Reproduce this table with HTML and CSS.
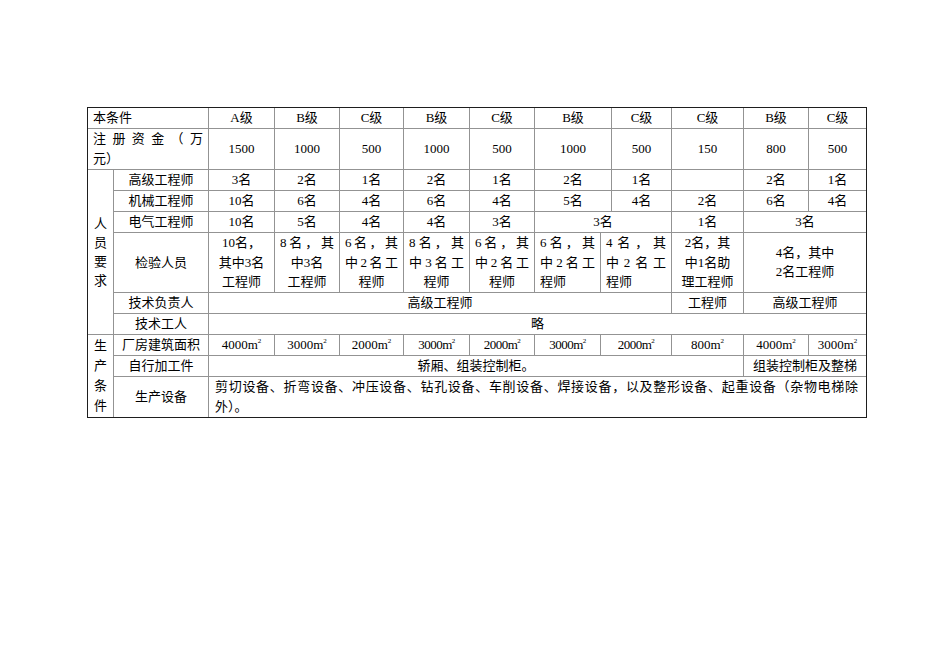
FILE: index.html
```html
<!DOCTYPE html>
<html lang="zh-CN">
<head>
<meta charset="utf-8">
<title>本条件</title>
<link rel="stylesheet" href="styles.css">
</head>
<body>
<div class="page">
<table class="spec">
<colgroup>
<col class="c1"><col class="c2"><col class="c3"><col class="c4"><col class="c5"><col class="c6"><col class="c7"><col class="c8"><col class="c9"><col class="c10"><col class="c11"><col class="c12"><col class="c13">
</colgroup>
<tbody>
<tr>
<td colspan="2" class="left">本条件</td>
<td>A级</td><td>B级</td><td>C级</td><td>B级</td><td>C级</td><td colspan="2">B级</td><td>C级</td><td>C级</td><td>B级</td><td>C级</td>
</tr>
<tr>
<td colspan="2" class="left"><span class="jl">注册资金（万</span><span class="ln">元）</span></td>
<td>1500</td><td>1000</td><td>500</td><td>1000</td><td>500</td><td colspan="2">1000</td><td>500</td><td>150</td><td>800</td><td>500</td>
</tr>
<tr>
<td rowspan="6" class="vert"><span class="vtext">人<br>员<br>要<br>求</span></td>
<td>高级工程师</td>
<td>3名</td><td>2名</td><td>1名</td><td>2名</td><td>1名</td><td colspan="2">2名</td><td>1名</td><td></td><td>2名</td><td>1名</td>
</tr>
<tr>
<td>机械工程师</td>
<td>10名</td><td>6名</td><td>4名</td><td>6名</td><td>4名</td><td colspan="2">5名</td><td>4名</td><td>2名</td><td>6名</td><td>4名</td>
</tr>
<tr>
<td>电气工程师</td>
<td>10名</td><td>5名</td><td>4名</td><td>4名</td><td>3名</td><td colspan="3">3名</td><td>1名</td><td colspan="2">3名</td>
</tr>
<tr class="tall">
<td>检验人员</td>
<td><span class="ln">10名，</span><span class="ln">其中3名</span><span class="ln">工程师</span></td>
<td><span class="jl">8名，其</span><span class="ln">中3名</span><span class="ln">工程师</span></td>
<td><span class="jl">6名，其</span><span class="jl">中2名工</span><span class="ln">程师</span></td>
<td><span class="jl">8名，其</span><span class="jl">中3名工</span><span class="ln">程师</span></td>
<td><span class="jl">6名，其</span><span class="jl">中2名工</span><span class="ln">程师</span></td>
<td class="left"><span class="jl">6名，其</span><span class="jl">中2名工</span><span class="ln">程师</span></td>
<td colspan="2" class="left"><span class="jl">4名，其</span><span class="jl">中2名工</span><span class="ln">程师</span></td>
<td><span class="ln">2名，其</span><span class="ln">中1名助</span><span class="ln">理工程师</span></td>
<td colspan="2"><span class="ln">4名，其中</span><span class="ln">2名工程师</span></td>
</tr>
<tr>
<td>技术负责人</td>
<td colspan="8">高级工程师</td><td>工程师</td><td colspan="2">高级工程师</td>
</tr>
<tr>
<td>技术工人</td>
<td colspan="11">略</td>
</tr>
<tr>
<td rowspan="3" class="vert"><span class="vtext2">生<br>产<br>条<br>件</span></td>
<td>厂房建筑面积</td>
<td>4000m<sup class="sq">2</sup></td><td>3000m<sup class="sq">2</sup></td><td>2000m<sup class="sq">2</sup></td><td class="cond">3000m<sup class="sq">2</sup></td><td class="cond">2000m<sup class="sq">2</sup></td><td class="cond">3000m<sup class="sq">2</sup></td><td colspan="2" class="cond">2000m<sup class="sq">2</sup></td><td>800m<sup class="sq">2</sup></td><td>4000m<sup class="sq">2</sup></td><td>3000m<sup class="sq">2</sup></td>
</tr>
<tr>
<td>自行加工件</td>
<td colspan="9">轿厢、组装控制柜。</td><td colspan="2">组装控制柜及整梯</td>
</tr>
<tr>
<td>生产设备</td>
<td colspan="11" class="left para"><span class="jl">剪切设备、折弯设备、冲压设备、钻孔设备、车削设备、焊接设备，以及整形设备、起重设备（杂物电梯除</span><span class="ln">外）。</span></td>
</tr>
</tbody>
</table>
</div>
</body>
</html>
```

FILE: styles.css
```css
html, body {
  margin: 0;
  padding: 0;
  background: #ffffff;
}

body {
  font-family: "Liberation Serif", "Noto Sans CJK SC", serif;
  font-size: 13px;
  color: #000000;
  text-autospace: ideograph-alpha ideograph-numeric;
}

.page {
  padding: 107px 0 0 87px;
}

.spec {
  border-collapse: collapse;
  table-layout: fixed;
  width: 780px;
  outline: 1px solid #1e1e1e;
  outline-offset: -1px;
}

.c1 { width: 26px; }
.c2 { width: 95px; }
.c3 { width: 66px; }
.c4 { width: 65px; }
.c5 { width: 64px; }
.c6 { width: 66px; }
.c7 { width: 65px; }
.c8 { width: 66px; }
.c9 { width: 11px; }
.c10 { width: 60px; }
.c11 { width: 72px; }
.c12 { width: 65px; }
.c13 { width: 58px; }

.spec td {
  border: 1px solid #939393;
  padding: 0 5px;
  line-height: 20px;
  height: 20px;
  text-align: center;
  vertical-align: middle;
  white-space: nowrap;
  overflow: hidden;
}

.spec td.left {
  text-align: left;
}

.spec .tall td {
  line-height: 19.5px;
}

.jl {
  display: block;
  white-space: normal;
  text-align: justify;
  text-align-last: justify;
}

.ln {
  display: block;
}

.spec td.vert {
  padding: 0;
  text-align: center;
}

.vtext {
  display: block;
  line-height: 19px;
}

.vtext2 {
  display: block;
  line-height: 20px;
}

.spec td.para {
  padding: 0 8px 0 6px;
}

.sq {
  font-size: 7px;
  line-height: 0;
  vertical-align: 6px;
}

.cond {
  letter-spacing: -0.5px;
}
```
